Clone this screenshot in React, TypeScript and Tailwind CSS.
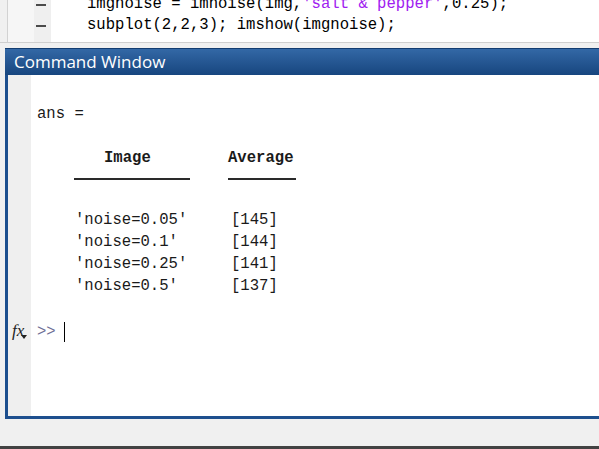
import React from "react";

const mono = { fontFamily: '"Liberation Mono", "Courier New", monospace' };

const rows = [
  ["'noise=0.05'", "[145]"],
  ["'noise=0.1'", "[144]"],
  ["'noise=0.25'", "[141]"],
  ["'noise=0.5'", "[137]"],
];

function Editor() {
  return (
    <div className="flex h-[43px] shrink-0 border-b border-[#cfcfcf]">
      <div className="w-[7px] bg-[#f0f0f0]" />
      <div className="w-[27px] border-l border-[#d2d2d2] bg-[#f6f6f6]" />
      <div className="flex w-[17px] flex-col items-center bg-[#efefef] pt-[4px]">
        <div className="ml-[-3px] h-[2px] w-[10px] bg-[#4a4a4a]" />
        <div className="ml-[-3px] mt-[19px] h-[2px] w-[10px] bg-[#4a4a4a]" />
      </div>
      <div
        className="flex-1 overflow-hidden bg-white pl-[36px] text-[15.6px] leading-[21px] text-black"
        style={mono}
      >
        <div className="mt-[-6px] whitespace-pre">
          imgnoise = imnoise(img,<span className="text-[#a020f0]">'salt &amp; pepper'</span>,0.25);
        </div>
        <div className="whitespace-pre">subplot(2,2,3); imshow(imgnoise);</div>
      </div>
    </div>
  );
}

function CommandWindow() {
  return (
    <div className="ml-[5px] mt-[5px] flex h-[371px] flex-col">
      <div
        className="flex h-[27px] shrink-0 items-center border-t border-[#123c70] bg-gradient-to-b from-[#3368a6] to-[#17467f] pl-[9px] text-[17px] text-white"
        style={{ fontFamily: '"Open Sans", "Noto Sans", sans-serif' }}
      >
        Command Window
      </div>
      <div className="flex flex-1 border-b-[3px] border-l-[3px] border-[#1d4f8e]">
        <div className="w-[23px] bg-[#efefef]">
          <div className="relative ml-[4px] mt-[243px] h-[22px] w-[16px]">
            <span
              className="text-[17px] italic leading-[22px] text-[#222]"
              style={{ fontFamily: '"Liberation Serif", serif' }}
            >
              fx
            </span>
            <svg className="absolute left-[9px] top-[17px]" width="6" height="4" viewBox="0 0 6 4">
              <path d="M0 0 L6 0 L3 4 Z" fill="#222" />
            </svg>
          </div>
        </div>
        <div
          className="flex-1 bg-white pl-[6px] pt-[28px] text-[15.6px] leading-[22px] text-[#1a1a1a]"
          style={mono}
        >
          <div className="whitespace-pre">ans =</div>
          <div className="mt-[22px] flex pl-[37px] font-bold">
            <div className="w-[154px] pl-[30px]">Image</div>
            <div>Average</div>
          </div>
          <div className="flex h-[11px] items-end pl-[37px]">
            <div className="w-[154px]">
              <div className="h-[2px] w-[116px] bg-[#2a2a2a]" />
            </div>
            <div className="h-[2px] w-[68px] bg-[#2a2a2a]" />
          </div>
          <div className="mt-[29px] pl-[37px]">
            {rows.map(([name, avg]) => (
              <div key={name} className="flex">
                <div className="w-[154px] pl-[1px] whitespace-pre">{name}</div>
                <div className="pl-[3px]">{avg}</div>
              </div>
            ))}
          </div>
          <div className="mt-[24px] flex h-[22px] items-center">
            <span className="text-[#6f6f96]">&gt;&gt;</span>
            <div className="ml-[8px] h-[20px] w-px bg-black" />
          </div>
        </div>
      </div>
    </div>
  );
}

export default function App() {
  return (
    <div className="flex h-[449px] w-[599px] flex-col overflow-hidden bg-[#f0f0f0]">
      <Editor />
      <CommandWindow />
      <div className="flex-1" />
      <div className="h-[3px] bg-[#424242]" />
    </div>
  );
}
